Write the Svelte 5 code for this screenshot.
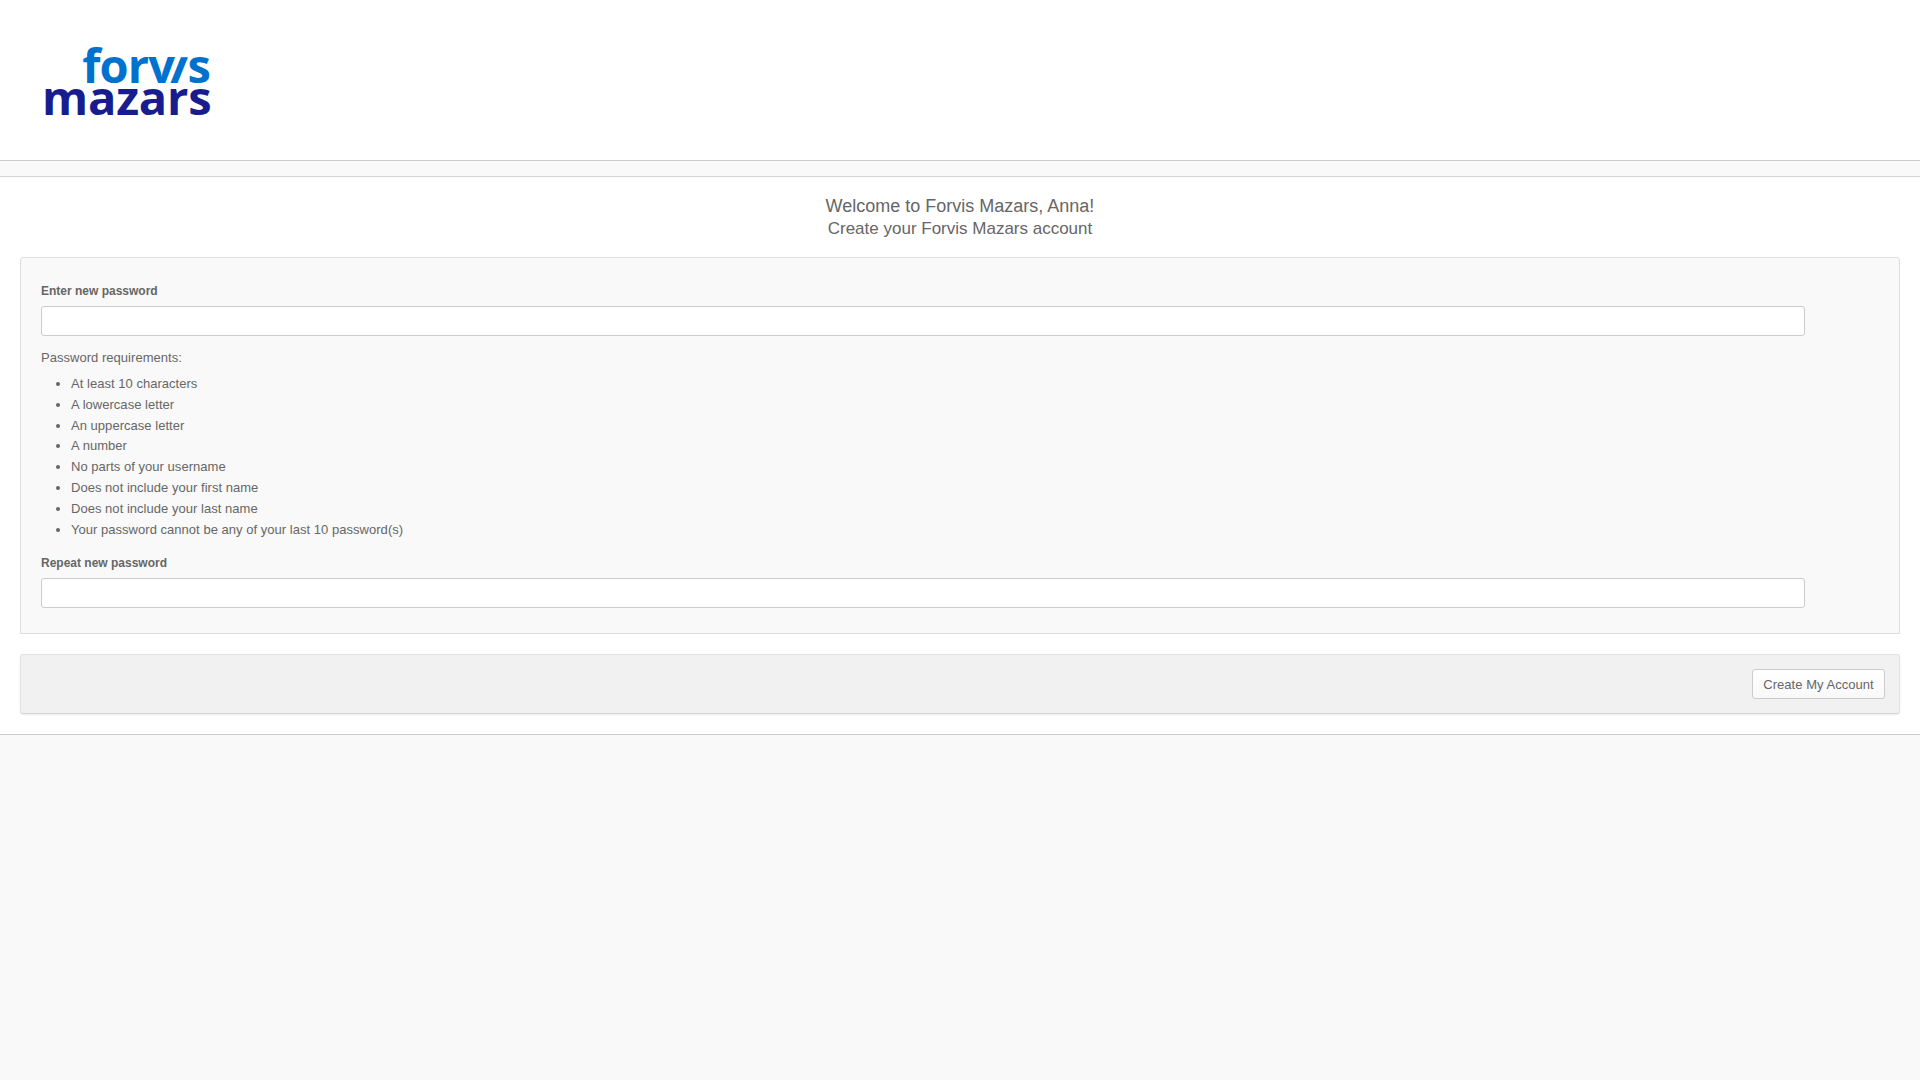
<script>
  const rules = [
    'At least 10 characters',
    'A lowercase letter',
    'An uppercase letter',
    'A number',
    'No parts of your username',
    'Does not include your first name',
    'Does not include your last name',
    'Your password cannot be any of your last 10 password(s)'
  ];
</script>

<div class="page">
  <header class="top">
    <div class="logo" aria-label="Forvis Mazars">
      <div class="l1">forv<span class="sl">ı</span>s</div>
      <div class="l2">mazars</div>
    </div>
  </header>
  <div class="strip"></div>
  <main class="content">
    <div class="welcome">
      <h1>Welcome to Forvis Mazars, Anna!</h1>
      <h2>Create your Forvis Mazars account</h2>
    </div>
    <section class="panel">
      <label for="p1">Enter new password</label>
      <input id="p1" type="password" />
      <p class="req">Password requirements:</p>
      <ul>
        {#each rules as r}
          <li>{r}</li>
        {/each}
      </ul>
      <label for="p2">Repeat new password</label>
      <input id="p2" type="password" />
    </section>
    <section class="actions">
      <button type="button">Create My Account</button>
    </section>
  </main>
</div>

<style>
  :global(body) {
    margin: 0;
    background: #f9f9f9;
  }
  .page {
    font-family: "Liberation Sans", Arial, sans-serif;
    font-size: 13px;
    color: #666;
    text-rendering: optimizeSpeed;
  }
  .top {
    height: 160px;
    background: #fff;
    padding: 45px 0 0 45px;
    box-sizing: border-box;
  }
  .logo {
    width: 165px;
    height: 70px;
    font-family: "Open Sans", sans-serif;
    font-weight: 700;
    text-align: right;
  }
  .l1 {
    color: #0072ce;
    font-size: 47px;
    line-height: 40px;
    height: 39px;
    letter-spacing: -0.9px;
  }
  .sl {
    display: inline-block;
    transform: skewX(-22deg);
    margin: 0;
  }
  .l2 {
    color: #171c8f;
    font-size: 47px;
    line-height: 27px;
    letter-spacing: -0.2px;
    text-align: left;
    margin-left: -3px;
    white-space: nowrap;
  }
  .strip {
    height: 15px;
    background: #f9f9f9;
    border-top: 1px solid #ccc;
    border-bottom: 1px solid #d5d5d5;
  }
  .content {
    background: #fff;
    padding: 18px 20px 20px;
    border-bottom: 1px solid #ccc;
  }
  .welcome {
    text-align: center;
    margin-bottom: 17px;
  }
  h1 {
    margin: 0;
    font-size: 18px;
    line-height: 23px;
    font-weight: 400;
  }
  h2 {
    margin: 0;
    font-size: 17px;
    line-height: 22px;
    font-weight: 400;
  }
  .panel {
    background: #f9f9f9;
    border: 1px solid #ddd;
    border-radius: 3px 3px 0 0;
    padding: 25px 20px 20px;
    height: 377px;
    box-sizing: border-box;
  }
  label {
    display: block;
    font-size: 12px;
    font-weight: 700;
    line-height: 16px;
    margin-bottom: 7px;
  }
  input {
    display: block;
    width: 1764px;
    height: 30px;
    box-sizing: border-box;
    border: 1px solid #ccc;
    border-radius: 3px;
    background: #fff;
    padding: 0 8px;
  }
  .req {
    margin: 13px 0 0;
    line-height: 18px;
    letter-spacing: 0.03px;
  }
  ul {
    margin: 7px 0 15px;
    padding: 0 0 0 30px;
    letter-spacing: 0.03px;
  }
  li {
    line-height: 20.8px;
  }
  .actions {
    margin-top: 20px;
    background: #f1f1f1;
    border: 1px solid #e2e2e2;
    border-bottom-color: #d5d5d5;
    border-radius: 3px;
    height: 60px;
    box-sizing: border-box;
    box-shadow: 0 1px 2px rgba(0, 0, 0, 0.08);
    display: flex;
    justify-content: flex-end;
    align-items: center;
    padding-right: 14px;
  }
  button {
    height: 30px;
    width: 133px;
    padding: 0;
    font-family: inherit;
    font-size: 13px;
    letter-spacing: 0.04px;
    color: #666;
    background: linear-gradient(#fff, #f9f9f9);
    border: 1px solid #ccc;
    border-radius: 3px;
    text-rendering: inherit;
  }
</style>
